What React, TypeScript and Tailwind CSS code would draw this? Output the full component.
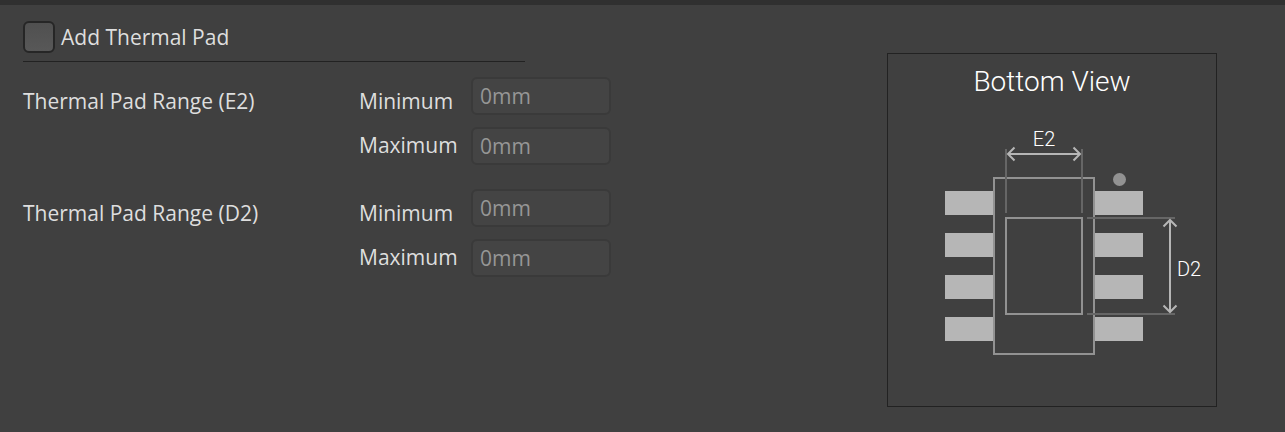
import { useState } from "react";

const PAD_ROWS = [137, 179, 221, 263];

function RangeGroup({ name }: { name: string }) {
  const minId = `${name}-min`;
  const maxId = `${name}-max`;
  const field =
    "block h-[38px] w-[140px] rounded-md border-2 border-[#3a3a3a] bg-[#444444] px-[7px] text-[21px] text-[#969696] outline-none";
  return (
    <fieldset className="flex items-start">
      <div className="w-[336px] pt-[10px] leading-7">Thermal Pad Range ({name})</div>
      <div className="flex w-28 flex-col gap-4 pt-[10px] leading-7">
        <label htmlFor={minId}>Minimum</label>
        <label htmlFor={maxId}>Maximum</label>
      </div>
      <div className="flex flex-col gap-3">
        <input id={minId} className={field} disabled defaultValue="0mm" />
        <input id={maxId} className={field} disabled defaultValue="0mm" />
      </div>
    </fieldset>
  );
}

function BottomView() {
  return (
    <figure className="w-[330px] shrink-0 border border-[#222222]">
      <svg
        viewBox="0 0 328 352"
        className="block w-full font-['Roboto',sans-serif] font-light"
        role="img"
        aria-label="Bottom view of the package"
        fill="none"
        strokeWidth="2"
      >
        <text x="164" y="37" textAnchor="middle" fontSize="28" fill="#ffffff">
          Bottom View
        </text>
        {PAD_ROWS.map((y) => (
          <g key={y} fill="#b6b6b6">
            <rect x="57" y={y} width="48" height="24" />
            <rect x="207" y={y} width="48" height="24" />
          </g>
        ))}
        <rect x="106" y="124" width="100" height="176" stroke="#929292" />
        <rect x="118" y="164" width="76" height="96" stroke="#929292" />
        <path d="M118 95V159M194 95V159M199 164H287M199 260H287" stroke="#666666" />
        <path
          d="M120 100H192M126.500 93.500L120 100L126.500 106.500M185.500 93.500L192 100L185.500 106.500"
          stroke="#b6b6b6"
        />
        <path
          d="M282 166V258M275.500 172.500L282 166L288.500 172.500M275.500 251.500L282 258L288.500 251.500"
          stroke="#b6b6b6"
        />
        <circle cx="231.500" cy="125.500" r="6.500" fill="#929292" />
        <g fill="#ffffff" fontSize="20" textAnchor="middle">
          <text x="156" y="92">E2</text>
          <text x="301" y="222">D2</text>
        </g>
      </svg>
    </figure>
  );
}

export default function App() {
  const [enabled, setEnabled] = useState(false);
  return (
    <main className="min-h-screen border-t-[5px] border-[#303030] bg-[#404040] font-['Open_Sans',sans-serif] text-[21px] text-[#dedede]">
      <div className="flex items-start justify-between pt-4 pr-[68px] pl-[23px]">
        <form>
          <div className="flex w-[502px] items-center gap-[6px] border-b border-[#222222] pb-2">
            <input
              id="thermal-pad"
              type="checkbox"
              checked={enabled}
              onChange={(e) => setEnabled(e.target.checked)}
              className="size-8 appearance-none rounded-md border-2 border-[#262626] bg-linear-to-b from-[#505050] to-[#585858] checked:from-[#8a8a8a] checked:to-[#8a8a8a]"
            />
            <label htmlFor="thermal-pad" className="leading-8">
              Add Thermal Pad
            </label>
          </div>
          <div className="flex flex-col gap-6 pt-[15px]">
            <RangeGroup name="E2" />
            <RangeGroup name="D2" />
          </div>
        </form>
        <div className="pt-8">
          <BottomView />
        </div>
      </div>
    </main>
  );
}
